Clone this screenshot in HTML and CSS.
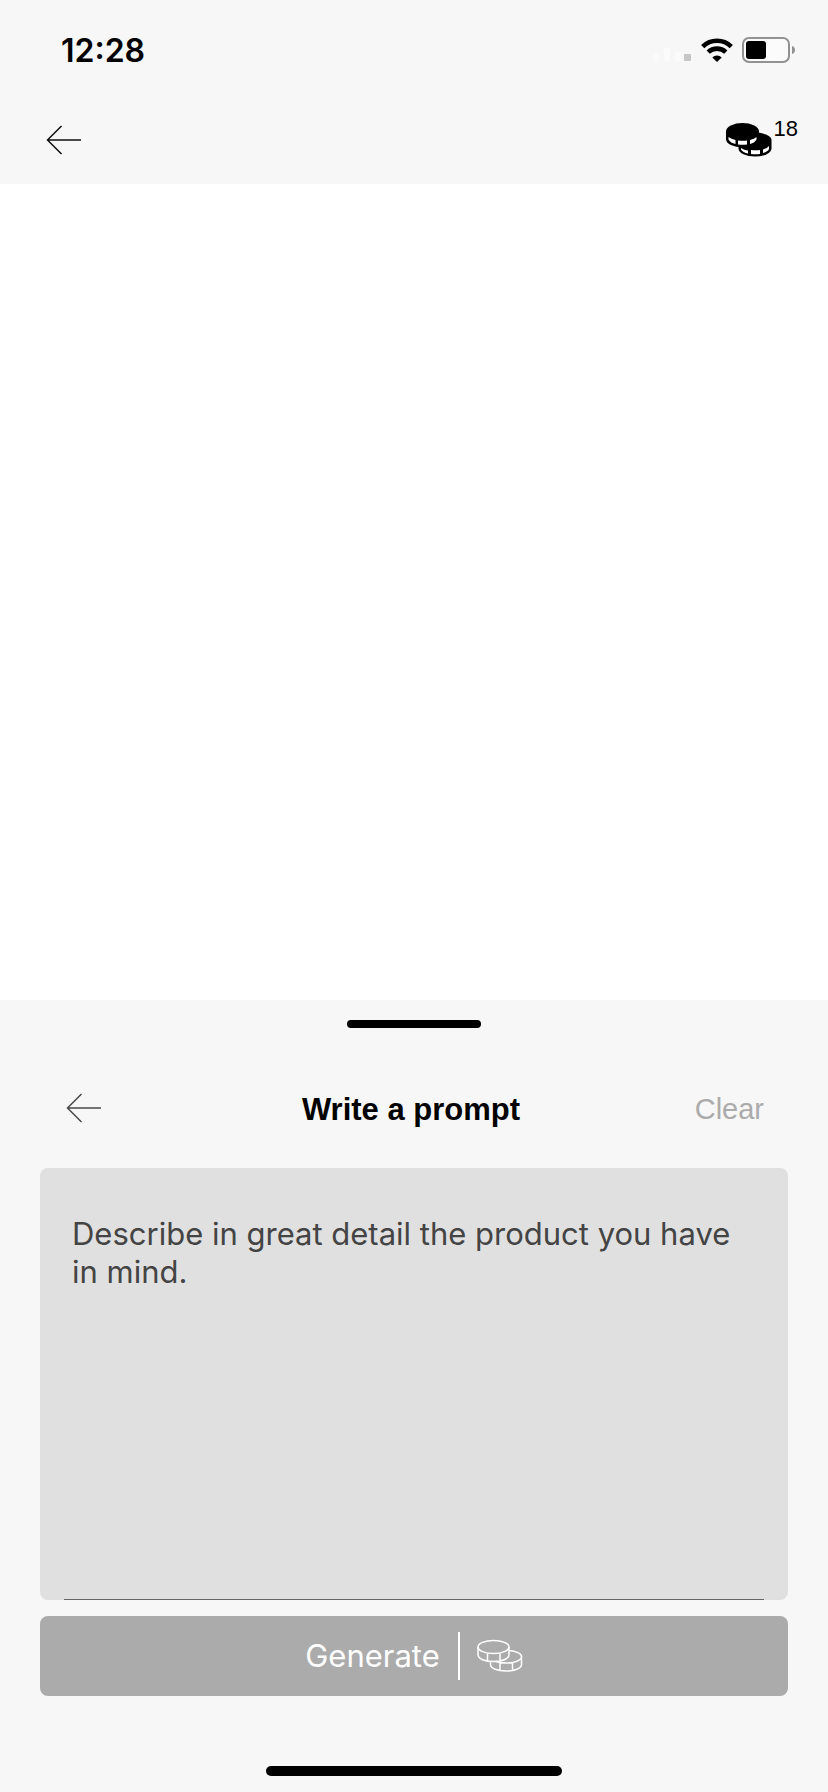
FILE: index.html
```html
<!DOCTYPE html>
<html lang="en">
<head>
<meta charset="utf-8">
<meta name="viewport" content="width=device-width, initial-scale=1">
<title>Write a prompt</title>
<link rel="stylesheet" href="styles.css">
</head>
<body>

<header class="top">
  <div class="status">
    <span class="time">12:28</span>
    <div class="status-icons">
      <svg width="40" height="24" viewBox="0 0 40 24">
        <rect x="1" y="15" width="6" height="8" rx="2" fill="#fbfbfb"/>
        <rect x="12" y="10" width="6" height="13" rx="2" fill="#fbfbfb"/>
        <rect x="23" y="14" width="6" height="9" rx="2" fill="#fbfbfb"/>
        <rect x="32" y="16" width="7" height="7" rx="1" fill="#c6c6c6"/>
      </svg>
      <svg width="32" height="24" viewBox="0 0 32 24">
        <g fill="none" stroke="#000" stroke-width="4.6">
          <path d="M1.7 8.6 A20.5 20.5 0 0 1 30.3 8.6"/>
          <path d="M7.2 14.2 A12.7 12.7 0 0 1 24.8 14.2"/>
        </g>
        <path d="M16 24 L11.3 19.4 A6.7 6.7 0 0 1 20.7 19.4 Z"/>
      </svg>
      <svg width="53" height="26" viewBox="0 0 53 26">
        <rect x="1" y="1" width="46" height="24" rx="6" fill="#fbfbfb" stroke="#929292" stroke-width="2"/>
        <rect x="4" y="4" width="20" height="18" rx="3"/>
        <path d="M50 9 C54 10 54 16 50 17 Z" fill="#929292"/>
      </svg>
    </div>
  </div>
  <nav class="nav">
    <button class="icon-btn" type="button" aria-label="Back">
      <svg width="36" height="30" viewBox="0 0 36 30"><path d="M35 15 H2 M15.5 1 L1.5 15 L15.5 29" fill="none" stroke="#111" stroke-width="1.5"/></svg>
    </button>
    <button class="credits" type="button" aria-label="18 credits">
      <svg width="46" height="34" viewBox="0 0 46 34">
        <path d="M12.5 17 A16.5 7.5 0 0 1 45.5 17 V25.5 A16.5 8 0 0 1 12.5 25.5 Z"/>
        <path d="M15 25 Q18 27 22 27.5 V30.5 Q17 29.5 15 26.5 Z M25 27 Q29.5 27.5 34 27 V31 Q29.5 31.5 25 31 Z M37 26.5 Q41 25.5 43 23 V26 Q42 28.5 37 30 Z" fill="#fff"/>
        <path d="M0 8.5 A16.5 8.5 0 0 1 33 8.5 V16 A16.5 8.5 0 0 1 0 16 Z"/>
        <path d="M2.5 14 Q5 16 9.5 17 V21 Q4.5 20 2.5 16.5 Z M12 17.5 Q16.5 18 21 17.5 V21.5 Q16.5 22 12 21.5 Z M24 17 Q28.5 16 30.5 14 V16.5 Q28.5 20 24 21 Z" fill="#fff"/>
      </svg>
      <span>18</span>
    </button>
  </nav>
</header>

<main class="canvas"></main>

<section class="sheet">
  <div class="handle"></div>
  <div class="sheet-head">
    <button class="icon-btn" type="button" aria-label="Close prompt">
      <svg width="36" height="30" viewBox="0 0 36 30"><path d="M35 15 H2 M15.5 1 L1.5 15 L15.5 29" fill="none" stroke="#4a4a4a" stroke-width="1.5"/></svg>
    </button>
    <h1>Write a prompt</h1>
    <button class="clear" type="button">Clear</button>
  </div>
  <form class="prompt" onsubmit="return false">
    <div class="field">
      <textarea name="prompt" aria-label="Prompt" placeholder="Describe in great detail the product you have in mind."></textarea>
    </div>
    <button class="generate" type="submit">
      <span class="label">Generate</span>
      <svg width="46" height="34" viewBox="0 0 46 34" fill="none" stroke="#fff" stroke-width="1.5">
        <ellipse cx="16.5" cy="8" rx="15.5" ry="6.5"/>
        <path d="M1 8 V15.5 C1 20 8 22.5 16.5 22.5 S32 20 32 15.5 V8 M10.5 14.5 V22 M23 14.5 V22"/>
        <path d="M32 11.5 C39 12 44.5 14.5 44.5 17.5 C44.5 21.5 37.5 24 29 24 C25 24 21.5 23.5 19 22.5 M13.5 22.5 V25.5 C13.5 29.5 20.5 32 29 32 S44.5 29.5 44.5 25.5 V17.5 M23 23.5 V31.5 M35.5 23.5 V31.5"/>
      </svg>
    </button>
  </form>
  <div class="home-bar"></div>
</section>

</body>
</html>
```

FILE: styles.css
```css
* {
  box-sizing: border-box;
}
body {
  margin: 0;
  min-height: 100vh;
  display: flex;
  flex-direction: column;
  background: #fff;
  color: #000;
  font-family: Inter, "Liberation Sans", sans-serif;
}
button {
  padding: 0;
  border: none;
  background: none;
  color: inherit;
  font-family: "Liberation Sans", Arial, sans-serif;
}
svg {
  display: block;
}

/* top bar */
.top {
  background: #f7f7f7;
}
.status {
  display: flex;
  align-items: center;
  justify-content: space-between;
  height: 100px;
  padding: 0 33px 0 61px;
}
.time {
  font-size: 32px;
  font-weight: 600;
}
.status-icons {
  display: flex;
  align-items: center;
  gap: 9px;
}
.nav {
  display: flex;
  align-items: center;
  justify-content: space-between;
  height: 84px;
  padding: 0 30px 4px 46px;
}
.credits {
  display: flex;
  align-items: flex-start;
  gap: 2px;
  font-size: 22px;
  line-height: 24px;
}
.credits span {
  margin-top: -6px;
}

.canvas {
  flex: 1;
}

/* bottom sheet */
.sheet {
  padding: 20px 40px 16px;
  background: #f7f7f7;
}
.handle,
.home-bar {
  margin: 0 auto;
  border-radius: 5px;
  background: #000;
}
.handle {
  width: 134px;
  height: 8px;
}
.home-bar {
  width: 296px;
  height: 10px;
  margin-top: 70px;
}
.sheet-head {
  display: grid;
  grid-template-columns: 80px 1fr 88px;
  align-items: center;
  height: 80px;
  margin: 40px 24px 20px 26px;
}
h1 {
  margin: 0;
  padding-top: 4px;
  font: bold 31px/40px "Liberation Sans", Arial, sans-serif;
  text-align: center;
}
.clear {
  justify-self: end;
  padding-top: 3px;
  color: #ababab;
  font-size: 29px;
}
.prompt {
  display: flex;
  flex-direction: column;
  gap: 16px;
}
.field {
  height: 432px;
  padding: 0 24px;
  border-radius: 8px;
  background: #e0e0e0;
}
textarea {
  display: block;
  width: 100%;
  height: 100%;
  padding: 47px 8px 0;
  border: none;
  border-bottom: 1px solid #666;
  outline: none;
  background: none;
  resize: none;
  font: 31px/38px Inter, "Liberation Sans", sans-serif;
}
textarea::placeholder {
  color: #444;
  opacity: 1;
}
.generate {
  display: flex;
  align-items: center;
  justify-content: center;
  height: 80px;
  border-radius: 8px;
  background: #ababab;
  color: #fff;
  font: 31px/48px Inter, "Liberation Sans", sans-serif;
}
.generate .label {
  margin-right: 17px;
  padding-right: 18px;
  border-right: 2px solid #fff;
}
```
